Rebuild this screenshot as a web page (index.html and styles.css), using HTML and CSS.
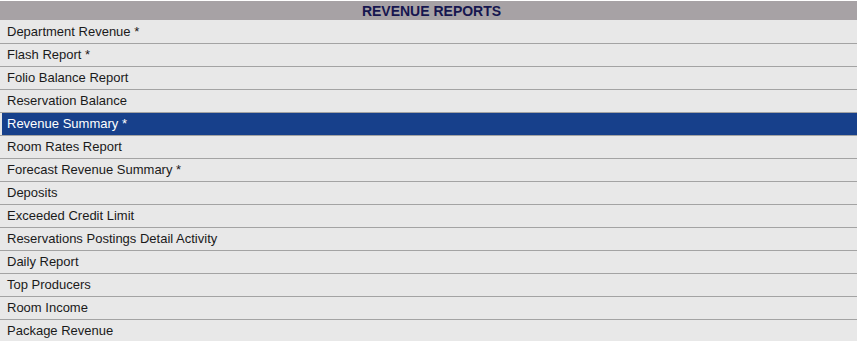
FILE: index.html
```html
<!DOCTYPE html>
<html lang="en">
<head>
    <meta charset="UTF-8">
    <title>Revenue Reports</title>
    <link rel="stylesheet" href="styles.css">
</head>
<body>
<div class="reports">
    <div class="title">REVENUE REPORTS</div>
    <ul class="list">
        <li><a href="#">Department Revenue *</a></li>
        <li><a href="#">Flash Report *</a></li>
        <li><a href="#">Folio Balance Report</a></li>
        <li><a href="#">Reservation Balance</a></li>
        <li class="active"><a href="#">Revenue Summary *</a></li>
        <li><a href="#">Room Rates Report</a></li>
        <li><a href="#">Forecast Revenue Summary *</a></li>
        <li><a href="#">Deposits</a></li>
        <li><a href="#">Exceeded Credit Limit</a></li>
        <li><a href="#">Reservations Postings Detail Activity</a></li>
        <li><a href="#">Daily Report</a></li>
        <li><a href="#">Top Producers</a></li>
        <li><a href="#">Room Income</a></li>
        <li><a href="#">Package Revenue</a></li>
    </ul>
</div>
</body>
</html>
```

FILE: styles.css
```css
*{
    margin: 0;
    padding: 0;
    list-style: none;
}
body{
    background: #fff;
    font-family: "Liberation Sans", Arial, sans-serif;
}
.reports{
    padding-top: 1px;
}
.reports .title{
    height: 19px;
    line-height: 21px;
    padding-left: 6px;
    background: #a7a2a5;
    color: #16164f;
    font-size: 14px;
    font-weight: bold;
    text-align: center;
    border-bottom: 1px solid #e8e8e8;
}
.reports .list li{
    background: #e8e8e8;
    border-bottom: 1px solid #a3a3a3;
}
.reports .list li a{
    display: block;
    height: 22px;
    line-height: 22px;
    padding-left: 7px;
    font-size: 13px;
    color: #1a1a1a;
    text-decoration: none;
}
.reports .list .active a{
    margin-left: 2px;
    padding-left: 5px;
    background: #17408b;
    color: #fff;
}
```
